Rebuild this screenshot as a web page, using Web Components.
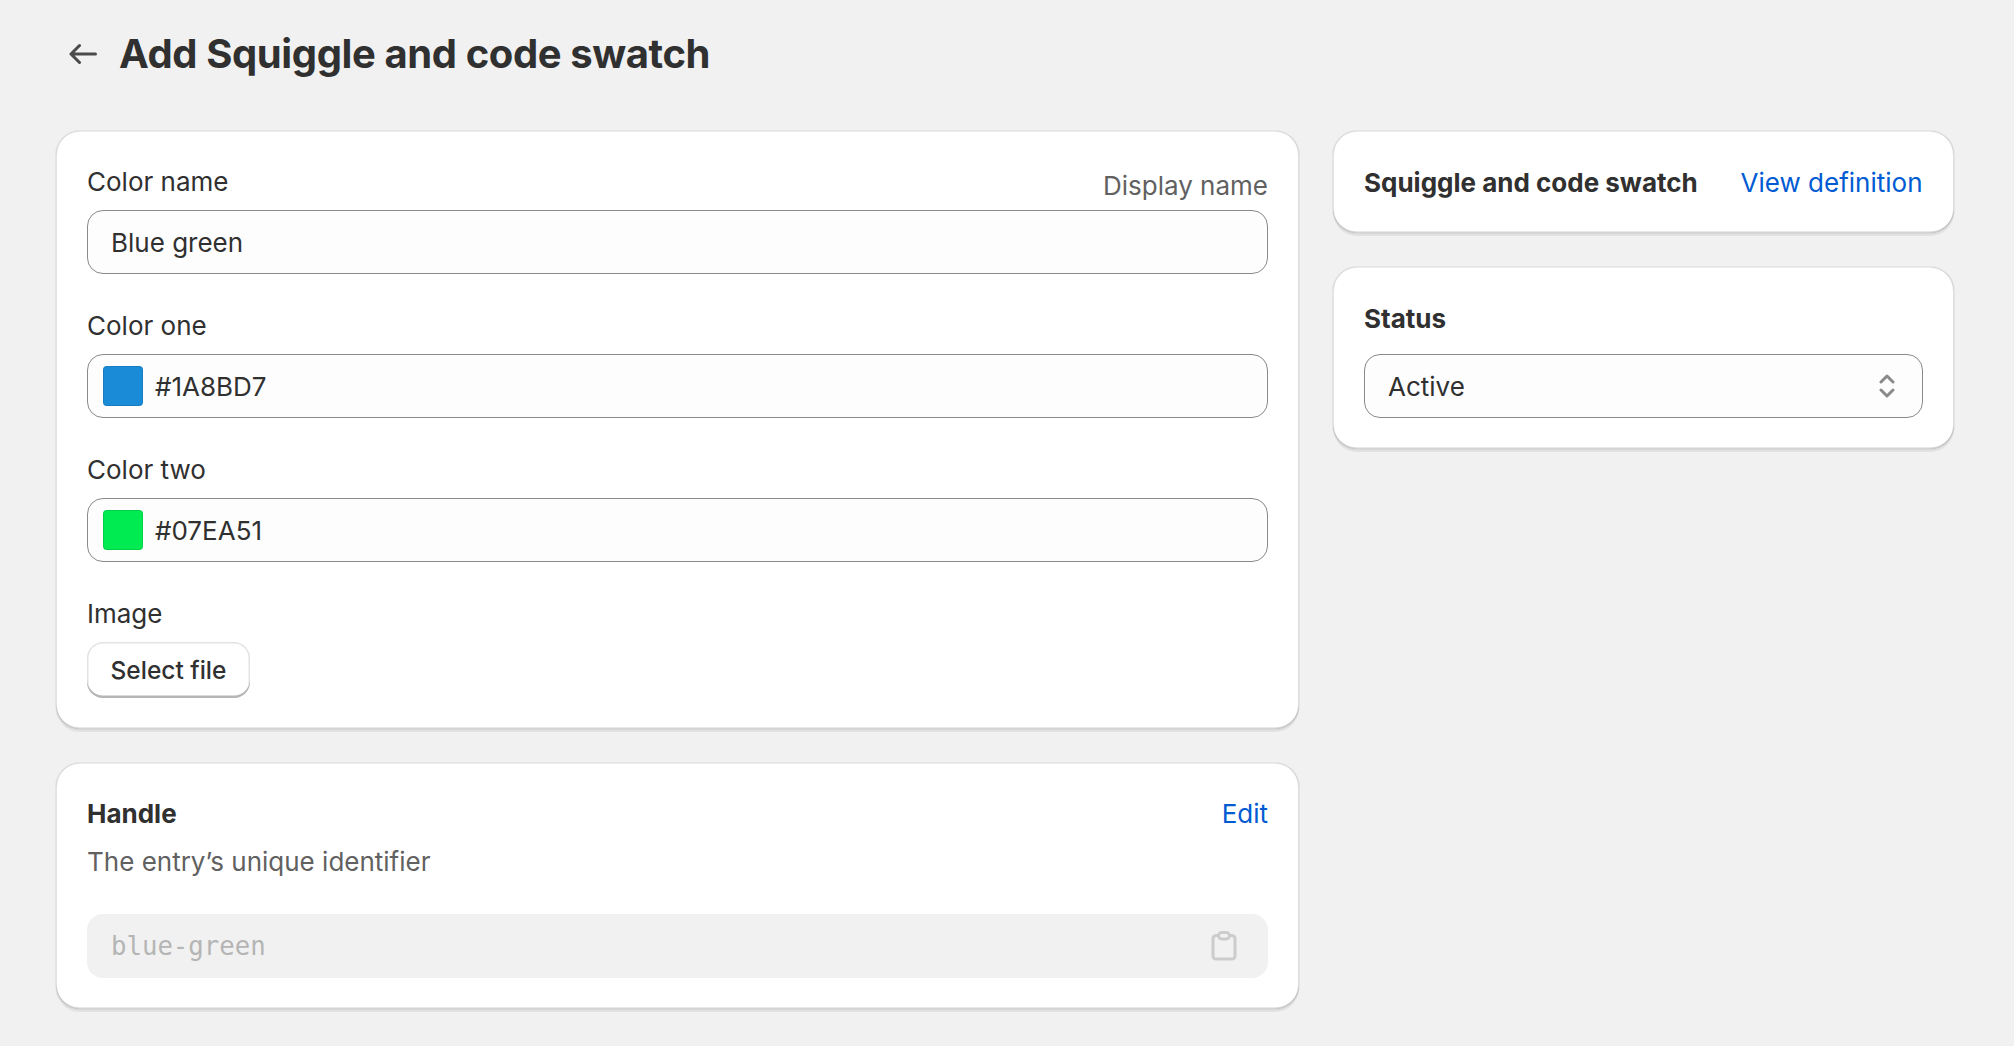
<!DOCTYPE html>
<html>
<head>
<meta charset="utf-8">
<title>Add Squiggle and code swatch</title>
<style>
    html, body { margin: 0; background: #f1f1f1; }
    body { font-family: Inter, "Liberation Sans", sans-serif; font-size: 26px; color: #303030; }
</style>
</head>
<body>
<template id="page-tpl">
    <style>
        :host { display: block; box-sizing: border-box; width: 2014px; height: 1046px; overflow: hidden; padding: 0 60.5px 0 56px; background: #f1f1f1; }
        .columns { display: grid; grid-template-columns: 1243px 620.5px; column-gap: 34px; align-items: start; }
        .stack { display: flex; flex-direction: column; gap: 34px; }
    </style>
    <slot name="header"></slot>
    <div class="columns">
        <div class="stack"><slot name="main"></slot></div>
        <div class="stack"><slot name="side"></slot></div>
    </div>
</template>

<template id="header-tpl">
    <style>
        :host { display: flex; align-items: center; height: 131px; padding-bottom: 23px; box-sizing: border-box; }
        svg { width: 28px; height: 22px; margin-left: 13px; margin-right: 22px; flex: none; }
        h1 { margin: 0; font: 700 40px/52px Inter, sans-serif; letter-spacing: -0.4px; color: #303030; }
    </style>
    <svg viewBox="0 0 28 22" fill="none" stroke="#4a4a4a" stroke-width="3" stroke-linecap="round" stroke-linejoin="round">
        <path d="M26.5 11H2M10.5 2.5 2 11l8.5 8.5"/>
    </svg>
    <h1><slot></slot></h1>
</template>

<template id="card-tpl">
    <style>
        :host { display: block; box-sizing: border-box; padding: 32px 31px 31px; background: #fff; border-radius: 24px;
            box-shadow: 0 0 0 1px rgba(0,0,0,.05), 0 3px 0 rgba(26,26,26,.07), inset 0 1px 0 rgba(0,0,0,.07), inset 1px 0 0 rgba(0,0,0,.11), inset -1px 0 0 rgba(0,0,0,.13), inset 0 -1.5px 0 rgba(0,0,0,.17); }
        :host([tight]) { padding: 31px; }
        :host([handle]) { padding: 30px 31px 31px; }
    </style>
    <slot></slot>
</template>

<template id="field-tpl">
    <style>
        :host { display: block; margin-bottom: 33px; }
        .label { display: flex; justify-content: space-between; align-items: flex-end; height: 38px; margin-bottom: 9px; line-height: 38px; }
        .hint { color: #616161; line-height: 32px; transform: translateY(1px); }
    </style>
    <div class="label"><span><slot name="label"></slot></span><span class="hint"><slot name="hint"></slot></span></div>
    <slot></slot>
</template>

<template id="input-tpl">
    <style>
        :host { display: flex; align-items: center; box-sizing: border-box; height: 64px; padding: 0 23px; background: #fdfdfd; border: 1.5px solid #8a8a8a; border-radius: 16px; color: #303030; }
        :host([swatch]) { padding-left: 15px; }
        .swatch { display: none; width: 40px; height: 40px; margin-right: 12px; border-radius: 4px; box-shadow: inset 0 0 0 1px rgba(0,0,0,.1); flex: none; }
        :host([swatch]) .swatch { display: block; }
    </style>
    <span class="swatch"></span>
    <slot></slot>
</template>

<template id="select-tpl">
    <style>
        :host { display: flex; align-items: center; justify-content: space-between; box-sizing: border-box; height: 64px; padding: 0 27px 0 23px; background: #fdfdfd; border: 1.5px solid #8a8a8a; border-radius: 16px; }
        svg { width: 16px; height: 24px; flex: none; }
    </style>
    <slot></slot>
    <svg viewBox="0 0 16 24" fill="none" stroke="#8a8a8a" stroke-width="3" stroke-linecap="round" stroke-linejoin="round">
        <path d="M2 8l6-6 6 6M2 16l6 6 6-6"/>
    </svg>
</template>

<template id="button-tpl">
    <style>
        :host { display: inline-flex; align-items: center; box-sizing: border-box; height: 56px; padding: 0 23.5px; background: #fff; border-radius: 16px; font-weight: 550; font-size: 24.5px;
            box-shadow: inset 0 -2.5px 0 #b5b5b5, inset 0 0 0 1.5px #e3e3e3; }
    </style>
    <slot></slot>
</template>

<template id="heading-tpl">
    <style>
        :host { display: flex; justify-content: space-between; align-items: center; height: 40px; }
        .title { font-weight: 650; }
        .action { color: #005bd3; }
    </style>
    <span class="title"><slot></slot></span>
    <span class="action"><slot name="action"></slot></span>
</template>

<template id="code-tpl">
    <style>
        :host { display: flex; align-items: center; justify-content: space-between; box-sizing: border-box; height: 64px; padding: 0 31px 0 24px; background: #f1f1f1; border-radius: 16px; color: #b5b5b5; font: 25.7px "DejaVu Sans Mono", monospace; }
        svg { width: 26px; height: 30px; flex: none; }
    </style>
    <slot></slot>
    <svg viewBox="0 0 26 30" fill="none" stroke="#cccccc" stroke-width="3" stroke-linejoin="round">
        <path d="M8 4.5H5a3 3 0 0 0-3 3V25a3 3 0 0 0 3 3h16a3 3 0 0 0 3-3V7.5a3 3 0 0 0-3-3h-3"/>
        <rect x="7.5" y="1.5" width="11" height="6.5" rx="3.2"/>
    </svg>
</template>

<swatch-page>
    <page-header slot="header">Add Squiggle and code swatch</page-header>

    <ui-card slot="main">
        <form-field>
            <span slot="label">Color name</span>
            <span slot="hint">Display name</span>
            <text-input>Blue green</text-input>
        </form-field>
        <form-field>
            <span slot="label">Color one</span>
            <text-input swatch="#1A8BD7">#1A8BD7</text-input>
        </form-field>
        <form-field>
            <span slot="label">Color two</span>
            <text-input swatch="#00EA51">#07EA51</text-input>
        </form-field>
        <form-field style="margin-bottom:0">
            <span slot="label">Image</span>
            <file-button>Select file</file-button>
        </form-field>
    </ui-card>

    <ui-card slot="main" handle>
        <card-heading>Handle<span slot="action">Edit</span></card-heading>
        <div style="color:#616161;line-height:40px;margin:9px 0 32px">The entry’s unique identifier</div>
        <code-field>blue-green</code-field>
    </ui-card>

    <ui-card slot="side" tight>
        <card-heading>Squiggle and code swatch<span slot="action">View definition</span></card-heading>
    </ui-card>

    <ui-card slot="side" tight>
        <card-heading style="margin-bottom:16px">Status</card-heading>
        <status-select>Active</status-select>
    </ui-card>
</swatch-page>

<script>
    // every element just clones its template into an open shadow root
    class TemplateElement extends HTMLElement {
        constructor(tplId) {
            super();
            this.attachShadow({ mode: 'open' });
            this.shadowRoot.appendChild(document.getElementById(tplId).content.cloneNode(true));
        }
    }

    class TextInput extends TemplateElement {
        constructor() {
            super('input-tpl');
        }

        connectedCallback() {
            const color = this.getAttribute('swatch');
            if (color) {
                this.shadowRoot.querySelector('.swatch').style.background = color;
            }
        }
    }

    const simple = {
        'swatch-page': 'page-tpl',
        'page-header': 'header-tpl',
        'ui-card': 'card-tpl',
        'form-field': 'field-tpl',
        'status-select': 'select-tpl',
        'file-button': 'button-tpl',
        'card-heading': 'heading-tpl',
        'code-field': 'code-tpl'
    };

    Object.entries(simple).forEach(([name, tplId]) => {
        customElements.define(name, class extends TemplateElement {
            constructor() {
                super(tplId);
            }
        });
    });

    customElements.define('text-input', TextInput);
</script>
</body>
</html>
